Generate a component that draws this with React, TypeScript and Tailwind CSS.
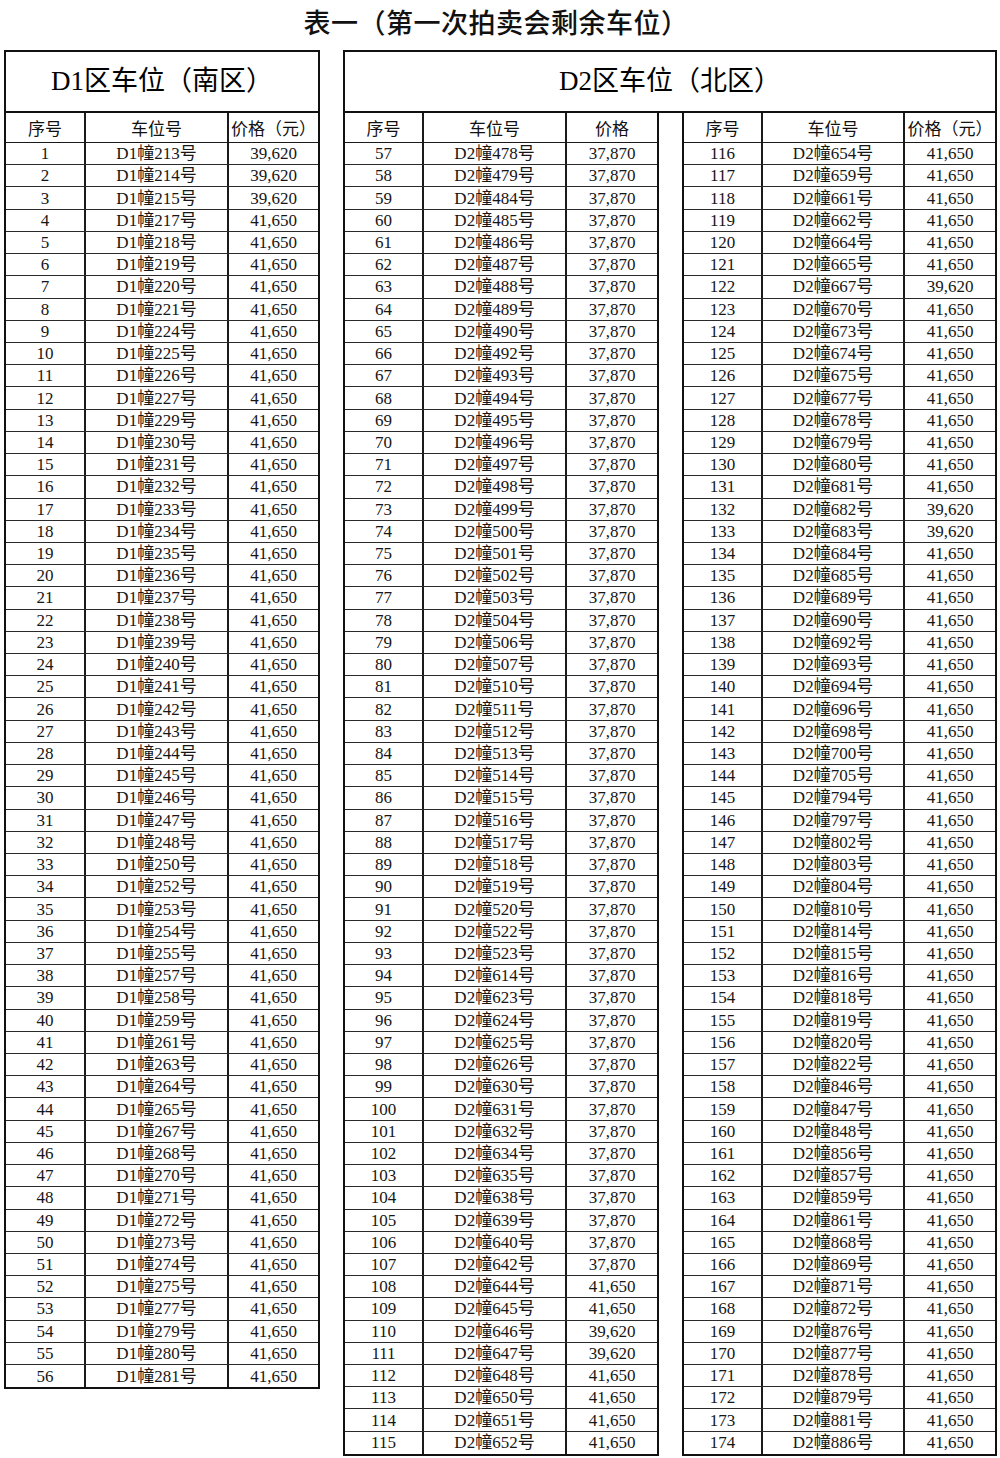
import React from 'react'

type Row = { no: number; code: string; price: string }

const P1 = '41,650'
const P2 = '39,620'
const P3 = '37,870'

function build(start: number, prefix: string, nums: number[], price: (i: number, n: number) => string): Row[] {
  return nums.map((n, i) => ({ no: start + i, code: `${prefix}幢${n}号`, price: price(i, n) }))
}

const d1Nums = [
  213, 214, 215, 217, 218, 219, 220, 221, 224, 225, 226, 227, 229, 230, 231, 232, 233, 234, 235, 236,
  237, 238, 239, 240, 241, 242, 243, 244, 245, 246, 247, 248, 250, 252, 253, 254, 255, 257, 258, 259,
  261, 263, 264, 265, 267, 268, 270, 271, 272, 273, 274, 275, 277, 279, 280, 281,
]

const d2aNums = [
  478, 479, 484, 485, 486, 487, 488, 489, 490, 492, 493, 494, 495, 496, 497, 498, 499, 500, 501, 502,
  503, 504, 506, 507, 510, 511, 512, 513, 514, 515, 516, 517, 518, 519, 520, 522, 523, 614, 623, 624,
  625, 626, 630, 631, 632, 634, 635, 638, 639, 640, 642, 644, 645, 646, 647, 648, 650, 651, 652,
]

const d2bNums = [
  654, 659, 661, 662, 664, 665, 667, 670, 673, 674, 675, 677, 678, 679, 680, 681, 682, 683, 684, 685,
  689, 690, 692, 693, 694, 696, 698, 700, 705, 794, 797, 802, 803, 804, 810, 814, 815, 816, 818, 819,
  820, 822, 846, 847, 848, 856, 857, 859, 861, 868, 869, 871, 872, 876, 877, 878, 879, 881, 886,
]

const d1Rows = build(1, 'D1', d1Nums, (i) => (i < 3 ? P2 : P1))
const d2aRows = build(57, 'D2', d2aNums, (_i, n) => {
  if (n <= 642) return P3
  if (n === 646 || n === 647) return P2
  return P1
})
const d2bRows = build(116, 'D2', d2bNums, (_i, n) => ([667, 682, 683].includes(n) ? P2 : P1))

const serif = 'font-["Liberation_Serif","Noto_Sans_CJK_SC",serif]'
const sans = 'font-["Noto_Sans_CJK_SC","Liberation_Sans",sans-serif]'

function ColHead({ cols, priceLabel }: { cols: string; priceLabel: string }) {
  return (
    <div className={`grid ${cols} h-[30px] border-b border-[#1a1a1a] text-[17px] text-[#111] ${sans}`}>
      <div className="flex items-center justify-center border-r-2 border-[#1a1a1a]">序号</div>
      <div className="flex items-center justify-center border-r-2 border-[#1a1a1a]">车位号</div>
      <div className="flex items-center justify-center whitespace-nowrap">{priceLabel}</div>
    </div>
  )
}

function Rows({ rows, cols }: { rows: Row[]; cols: string }) {
  return (
    <div className={`text-[17px] text-[#161616] ${serif}`}>
      {rows.map((r) => (
        <div key={r.no} className={`grid ${cols} h-[22.23px] border-b border-[#2a2a2a] last:border-b-0`}>
          <div className="flex items-center justify-center border-r-2 border-[#1a1a1a] leading-none">{r.no}</div>
          <div className="flex items-center justify-center border-r-2 border-[#1a1a1a] leading-none">{r.code}</div>
          <div className="flex items-center justify-center leading-none">{r.price}</div>
        </div>
      ))}
    </div>
  )
}

export default function App() {
  return (
    <div className="w-[1000px] h-[1458px] bg-white text-black overflow-hidden">
      <div className={`h-[50px] pb-[6px] pr-[8px] flex items-center justify-center text-[27px] font-medium tracking-[0.5px] text-[#111] ${sans}`}>
        表一（第一次拍卖会剩余车位）
      </div>

      <div className="flex items-start">
        {/* D1 南区 */}
        <div className="ml-[4px] w-[316px] border-2 border-[#111]">
          <div className={`h-[61px] flex items-center justify-center border-b-2 border-[#111] text-[27px] ${serif}`}>
            D1区车位（南区）
          </div>
          <ColHead cols="grid-cols-[80px_143px_1fr]" priceLabel="价格（元）" />
          <Rows rows={d1Rows} cols="grid-cols-[80px_143px_1fr]" />
        </div>

        {/* D2 北区 */}
        <div className="ml-[23px] w-[654px]">
          <div className={`h-[63px] flex items-center justify-center border-2 border-[#111] text-[27px] ${serif}`}>
            D2区车位（北区）
          </div>
          <div className="flex items-start">
            <div className="w-[316px] border-l-2 border-r-2 border-b-2 border-[#111]">
              <ColHead cols="grid-cols-[79px_143px_1fr]" priceLabel="价格" />
              <Rows rows={d2aRows} cols="grid-cols-[79px_143px_1fr]" />
            </div>
            <div className="w-[23px]" />
            <div className="w-[315px] border-l-2 border-r-2 border-b-2 border-[#111]">
              <ColHead cols="grid-cols-[79px_142px_1fr]" priceLabel="价格（元）" />
              <Rows rows={d2bRows} cols="grid-cols-[79px_142px_1fr]" />
            </div>
          </div>
        </div>
      </div>
    </div>
  )
}
